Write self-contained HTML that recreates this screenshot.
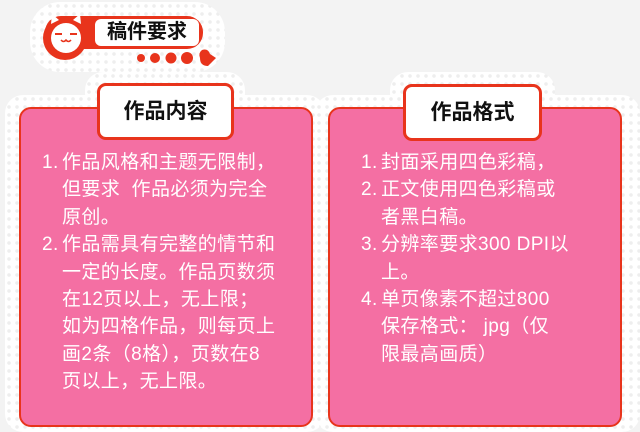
<!DOCTYPE html>
<html><head><meta charset="utf-8"><style>
*{margin:0;padding:0;box-sizing:border-box}
body{width:640px;height:432px;background:#f3f3f3;position:relative;overflow:hidden;font-family:"Liberation Sans","Noto Sans CJK SC",sans-serif}
.halo{position:absolute;background-color:#fff;background-image:radial-gradient(circle,#eeeeee 1.6px,transparent 2px);background-size:8px 8px;}
.card{position:absolute;top:107px;height:320px;background:#f46fa3;border:2px solid #e8341c;border-radius:12px}
.title{position:absolute;background:#fff;border:3px solid #e8341c;border-radius:9px;font-weight:bold;font-size:21px;color:#111;text-align:center;line-height:51px}
.txt{position:absolute;color:#fff;font-size:19px;line-height:27.4px;white-space:nowrap;letter-spacing:0.4px}
.txt div{padding-left:20px;position:relative}
.txt span{position:absolute;left:0}
</style></head><body>
<div class="halo" style="left:30px;top:2px;width:195px;height:70px;border-radius:30px"></div>
<div class="halo" style="left:85px;top:72px;width:160px;height:40px;border-radius:18px"></div>
<div class="halo" style="left:5px;top:95px;width:320px;height:337px;border-radius:18px"></div>
<div class="halo" style="left:390px;top:72px;width:165px;height:40px;border-radius:18px"></div>
<div class="halo" style="left:315px;top:95px;width:325px;height:337px;border-radius:18px"></div>

<div class="card" style="left:19px;width:294px"></div>
<div class="card" style="left:328px;width:294px"></div>
<div class="title" style="left:97px;top:83px;width:137px;height:57px">作品内容</div>
<div class="title" style="left:403px;top:84px;width:139px;height:57px">作品格式</div>

<div style="position:absolute;left:45px;top:16px;width:158px;height:33px;background:#e8341c;border-radius:16px"></div>
<div style="position:absolute;left:43px;top:16px;width:44px;height:44px;background:#e8341c;border-radius:50%"></div>
<svg style="position:absolute;left:43px;top:10px" width="46" height="50" viewBox="0 0 46 50">
<path d="M8 14 L9 4 L16 10 Z M38 14 L37 4 L30 10 Z" fill="#fff"/>
<circle cx="23" cy="28" r="15" fill="#fff"/>
<path d="M12 24 h7 M27 24 h7" stroke="#e8341c" stroke-width="2"/>
<path d="M18 30 q2.5 3 5 0 q2.5 3 5 0" stroke="#e8341c" stroke-width="1.5" fill="none"/>
</svg>
<div style="position:absolute;left:95px;top:19px;width:104px;height:27px;background:#fff;border-radius:6px;font-weight:bold;font-size:20px;line-height:27px;text-align:center;color:#111">稿件要求</div>
<svg style="position:absolute;left:130px;top:48px" width="95" height="22">
<circle cx="11" cy="10" r="4" fill="#e8341c"/><circle cx="25" cy="10" r="5" fill="#e8341c"/>
<circle cx="41" cy="10" r="5.5" fill="#e8341c"/><circle cx="57" cy="10" r="6" fill="#e8341c"/>
<path d="M72 2 q6 -2 8 4 l6 4 l-8 8 q-8 0 -8 -8 q-2 -5 2 -8z" fill="#e8341c"/>
</svg>

<div class="txt" style="left:42px;top:149px">
<div><span>1.</span>作品风格和主题无限制，<br>但要求&nbsp; 作品必须为完全<br>原创。</div>
<div><span>2.</span>作品需具有完整的情节和<br>一定的长度。作品页数须<br>在12页以上，无上限；<br>如为四格作品，则每页上<br>画2条（8格），页数在8<br>页以上，无上限。</div>
</div>
<div class="txt" style="left:361px;top:149px">
<div><span>1.</span>封面采用四色彩稿，</div>
<div><span>2.</span>正文使用四色彩稿或<br>者黑白稿。</div>
<div><span>3.</span>分辨率要求300 DPI以<br>上。</div>
<div><span>4.</span>单页像素不超过800<br>保存格式： jpg（仅<br>限最高画质）</div>
</div>
</body></html>
